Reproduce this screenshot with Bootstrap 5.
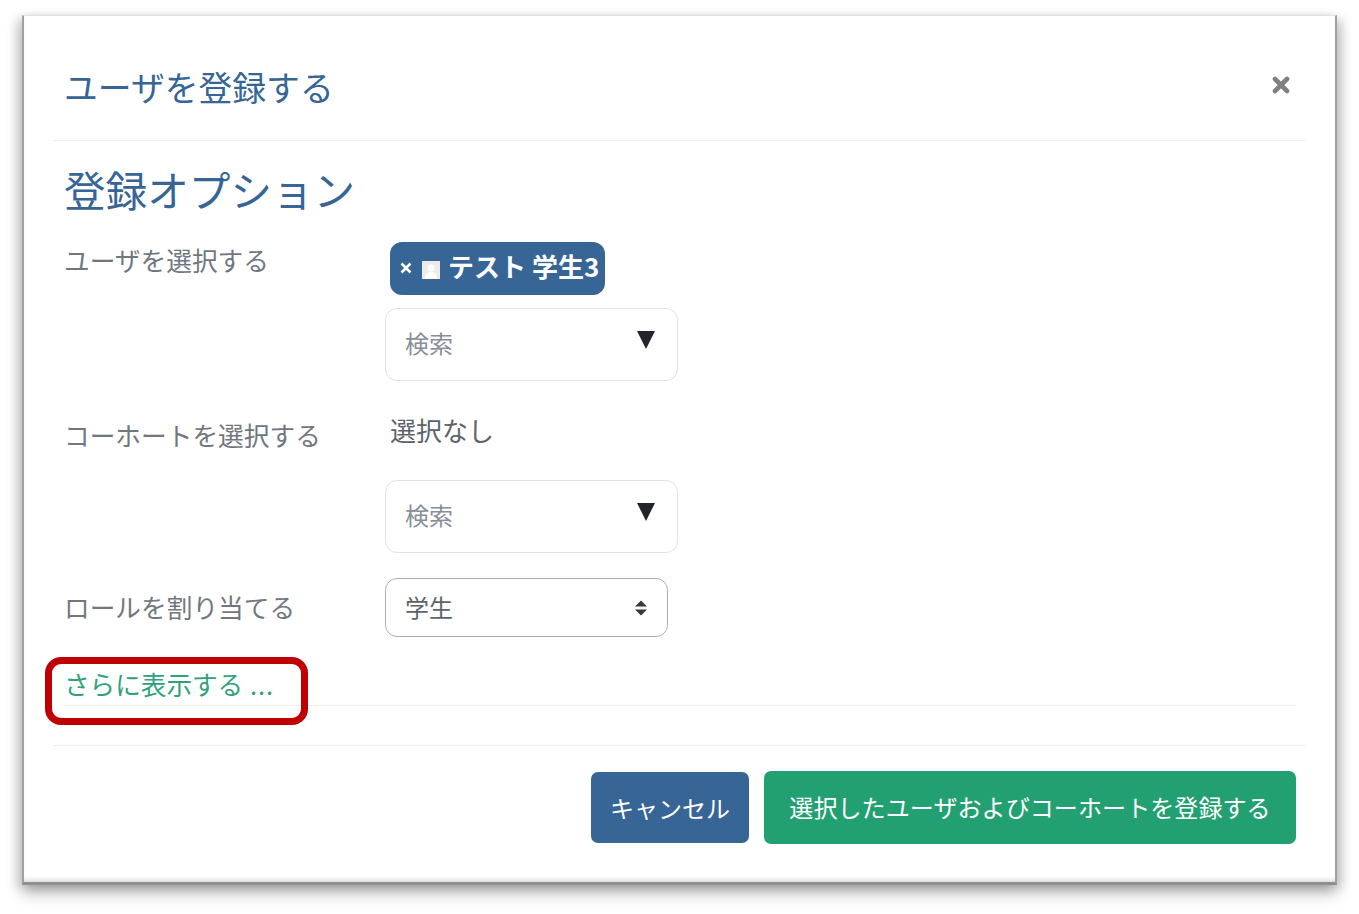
<!DOCTYPE html>
<html lang="ja">
<head>
<meta charset="utf-8">
<title>ユーザを登録する</title>
<link href="https://cdn.jsdelivr.net/npm/bootstrap@5.3.0/dist/css/bootstrap.min.css" rel="stylesheet">
<style>
html,body{height:100%;background:#fff;}
body{font-family:"Noto Sans CJK JP",sans-serif;padding:15px 22px 29px 22px;overflow:hidden;}
.shot-panel{height:870px;background:#fff;border-left:2px solid #a0a0a0;border-right:2px solid #a0a0a0;border-top:1px solid #e2e2e2;border-bottom:3px solid #8f8f8f;box-shadow:inset 0 -5px 4px -3px #d8d8d8,-6px 3px 10px rgba(0,0,0,.14),6px 3px 10px rgba(0,0,0,.14),0 10px 14px rgba(0,0,0,.2);padding:0 30px 0 30px;}
.shot-head{height:125px;border-bottom:1px solid #ececec;padding:0 15px 0 10px;}
.shot-title{color:#366596;font-size:33.8px;font-weight:400;line-height:1;margin:0;padding-top:54px;}
.shot-close{font-size:0;padding:0;border:0;background:none;margin-top:60px;width:18px;height:18px;}
.shot-body{height:604px;padding:0 9px 0 10px;position:relative;}
.shot-h2{color:#366596;font-size:41.6px;font-weight:400;line-height:1;margin:0;padding-top:28px;height:101px;}
.shot-label{width:321px;flex:none;color:#70777e;font-size:25.7px;line-height:1;}
.shot-l1{padding-top:5px;}
.shot-chip{background:#366596;color:#fff;border-radius:12px;font-size:26px;font-weight:700;height:53px;width:215px;padding:0 6px 0 10px;margin-left:5px;line-height:1;white-space:nowrap;}
.shot-chiptext{margin-top:-5px;}
.shot-chipx{width:12px;height:12px;flex:none;margin-top:-1px;}
.shot-avatar{width:18px;height:18px;background:#ececec;margin:3px 8px 0 10px;flex:none;}
.shot-combo{width:293px;height:73px;border:1px solid #dfe2e6;border-radius:12px;padding:0 22px 0 19px;color:#868e96;font-size:24px;line-height:1;background:#fff;}
.shot-ctext{margin-top:-4px;}
.shot-c1{margin-top:13px;}
.shot-c2{margin-top:37px;}
.shot-tri{width:18px;height:18px;margin-top:-10px;flex:none;}
.shot-none{color:#5c6369;font-size:26px;line-height:1;margin-left:5px;}
.shot-select{width:283px;height:59px;border:1px solid #a9adb5;border-radius:12px;padding:0 19px 0 19px;color:#5c6369;font-size:24px;line-height:1;background:#fff;}
.shot-stext{margin-top:-2px;}
.shot-more{color:#2ea27a;font-size:25.6px;line-height:1;text-decoration:none;display:block;margin-top:34px;}
.shot-dots{letter-spacing:1px;margin-left:1px;}
.shot-rule{border-top:1px solid #ececec;margin-top:8px;}
.shot-mark{position:absolute;left:-9px;top:516px;width:263px;height:68px;border:7px solid #c00000;border-radius:16px;pointer-events:none;}
.shot-foot{border-top:1px solid #ececec;padding:25px 9px 0 0;gap:15px;}
.shot-btn{font-size:24.1px;line-height:1;border-radius:7px;color:#fff;border:0;padding:0;display:flex;align-items:center;justify-content:center;}
.shot-cancel{width:158px;height:71px;background:#366596;margin-top:1px;font-size:24px;}
.shot-save{width:532px;height:73px;background:#23a071;}
.shot-cancel:hover{background:#366596;color:#fff;}
.shot-save:hover{background:#23a071;color:#fff;}
.shot-r2{margin-top:36px;}
.shot-l2{padding-top:5px;}
.shot-r3{margin-top:25px;}
.shot-l3{margin-top:-1px;}
</style>
</head>
<body>
<div class="shot-panel">
  <div class="shot-head d-flex justify-content-between align-items-start">
    <h5 class="shot-title">ユーザを登録する</h5>
    <button class="shot-close" type="button" aria-label="閉じる">
      <svg width="18" height="18" viewBox="0 0 18 18"><path d="M3 3l12 12M15 3L3 15" stroke="#808080" stroke-width="4.6" stroke-linecap="round"/></svg>
    </button>
  </div>
  <div class="shot-body">
    <h3 class="shot-h2">登録オプション</h3>
    <div class="d-flex">
      <div class="shot-label shot-l1">ユーザを選択する</div>
      <div>
        <div class="shot-chip d-flex align-items-center">
          <svg class="shot-chipx" viewBox="0 0 12 12"><path d="M1.500 1.500l9 9M10.500 1.500l-9 9" stroke="#fff" stroke-width="2.600"/></svg>
          <svg class="shot-avatar" viewBox="0 0 18 18"><circle cx="9" cy="7" r="3.6" fill="#fff"/><path d="M3 18c0-5 3-7 6-7s6 2 6 7z" fill="#fff"/></svg>
          <span class="shot-chiptext">テスト 学生3</span>
        </div>
        <div class="shot-combo d-flex justify-content-between align-items-center shot-c1">
          <span class="shot-ctext">検索</span>
          <svg class="shot-tri" viewBox="0 0 18 18"><path d="M0 0h18L9 18z" fill="#212529"/></svg>
        </div>
      </div>
    </div>
    <div class="d-flex shot-r2">
      <div class="shot-label shot-l2">コーホートを選択する</div>
      <div>
        <div class="shot-none">選択なし</div>
        <div class="shot-combo d-flex justify-content-between align-items-center shot-c2">
          <span class="shot-ctext">検索</span>
          <svg class="shot-tri" viewBox="0 0 18 18"><path d="M0 0h18L9 18z" fill="#212529"/></svg>
        </div>
      </div>
    </div>
    <div class="d-flex align-items-center shot-r3">
      <div class="shot-label shot-l3">ロールを割り当てる</div>
      <div class="shot-select d-flex justify-content-between align-items-center">
        <span class="shot-stext">学生</span>
        <svg width="14" height="18" viewBox="0 0 14 18"><path d="M7 1.500l6 6H1zM7 16.500l-6-6h12z" fill="#343a40"/></svg>
      </div>
    </div>
    <a class="shot-more" href="#">さらに表示する <span class="shot-dots">...</span></a>
    <div class="shot-rule"></div>
    <div class="shot-mark"></div>
  </div>
  <div class="shot-foot d-flex justify-content-end align-items-start">
    <button class="btn shot-btn shot-cancel" type="button">キャンセル</button>
    <button class="btn shot-btn shot-save" type="button">選択したユーザおよびコーホートを登録する</button>
  </div>
</div>
</body>
</html>
